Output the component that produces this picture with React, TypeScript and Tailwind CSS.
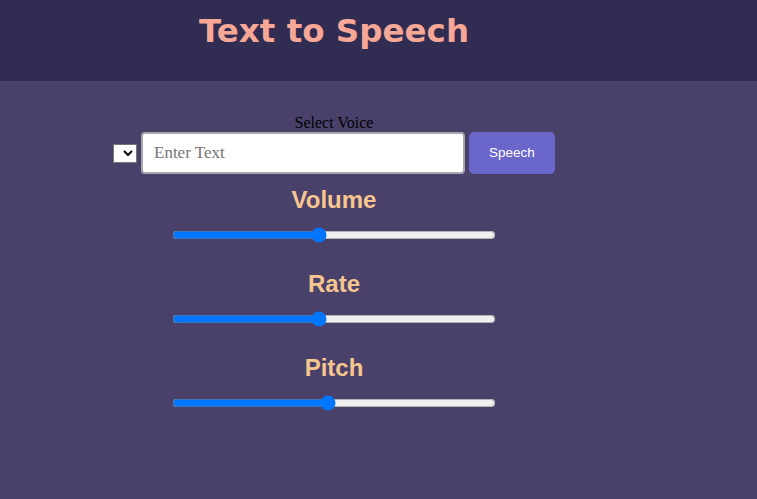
import { useState } from "react";

function Slider({ label, value, onChange }: { label: string; value: number; onChange: (v: number) => void }) {
  return (
    <div className="flex flex-col items-center">
      <h2 className="font-['Liberation_Sans',Arial,sans-serif] text-[24px] font-bold leading-[28px] text-[#f7c68f]">
        {label}
      </h2>
      <input
        type="range"
        min={0}
        max={100}
        value={value}
        onChange={(e) => onChange(Number(e.target.value))}
        className="mt-[13px] h-4 w-[324px]"
      />
    </div>
  );
}

export default function App() {
  const [text, setText] = useState("");
  const [volume, setVolume] = useState(45);
  const [rate, setRate] = useState(45);
  const [pitch, setPitch] = useState(48);

  return (
    <div className="min-h-[499px] bg-[#4a416b]">
      <header className="h-[81px] bg-[#312c52]">
        <div className="flex w-[668px] justify-center pt-[11px]">
          <h1 className="font-['DejaVu_Sans',Verdana,sans-serif] text-[32.5px] font-bold leading-[40px] text-[#f6a796]">
            Text to Speech
          </h1>
        </div>
      </header>

      <main className="flex w-[668px] flex-col items-center pt-[33px]">
        <label className="font-['Liberation_Serif','Times_New_Roman',serif] text-[16px] leading-[18px] text-black">
          Select Voice
        </label>
        <div className="flex items-center gap-1">
          <select className="h-[19px] w-[24px] border border-[#767676] bg-white text-black" />
          <input
            value={text}
            onChange={(e) => setText(e.target.value)}
            placeholder="Enter Text"
            className="h-[42px] w-[324px] rounded-[4px] border-2 border-[#a9a6b0] bg-white px-[11px] font-['Liberation_Serif','Times_New_Roman',serif] text-[17px] text-black placeholder:text-[#757575] outline-none"
          />
          <button className="h-[42px] w-[86px] rounded-[5px] bg-[#6b66c9] font-['Liberation_Sans',Arial,sans-serif] text-[13.5px] text-white">
            Speech
          </button>
        </div>

        <div className="mt-[12px] flex flex-col gap-[27px]">
          <Slider label="Volume" value={volume} onChange={setVolume} />
          <Slider label="Rate" value={rate} onChange={setRate} />
          <Slider label="Pitch" value={pitch} onChange={setPitch} />
        </div>
      </main>
    </div>
  );
}
